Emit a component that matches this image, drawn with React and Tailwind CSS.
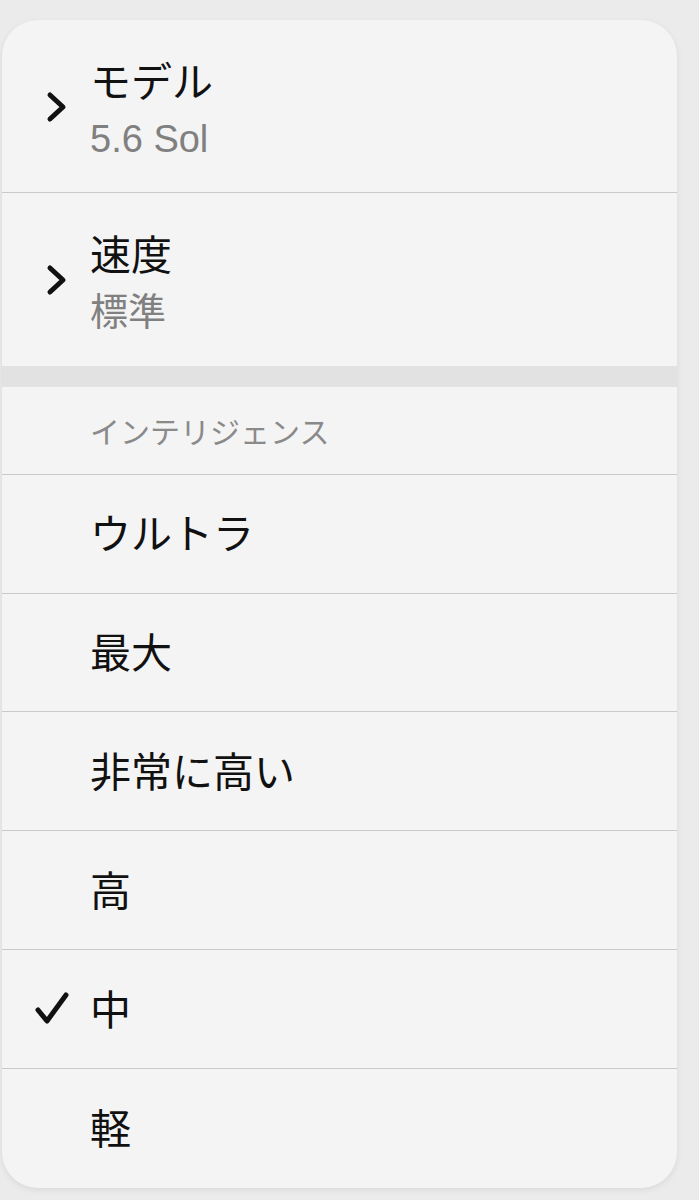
const Chevron = () => (
  <svg width="22" height="32" viewBox="0 0 22 32" fill="none">
    <polyline points="4,4 17,16 4,28" stroke="#111" strokeWidth="5" strokeLinecap="round" strokeLinejoin="round" />
  </svg>
)

const Check = () => (
  <svg width="36" height="36" viewBox="0 0 36 36" fill="none">
    <polyline points="4,19 13,30 32,4" stroke="#111" strokeWidth="5" strokeLinecap="round" strokeLinejoin="round" />
  </svg>
)

const levels = [
  { label: 'ウルトラ' },
  { label: '最大' },
  { label: '非常に高い' },
  { label: '高' },
  { label: '中', checked: true },
  { label: '軽' },
]

function SubmenuRow({ title, value, divider }) {
  return (
    <div className={`flex items-center h-[173px] ${divider ? 'border-b border-[#c9c9c9]' : ''}`}>
      <div className="w-[88px] flex justify-end pr-[22px] pt-[2px]">
        <Chevron />
      </div>
      <div className="flex flex-col pt-[8px]">
        <span className="text-[41px] leading-[52px] text-[#111]">{title}</span>
        <span className="text-[38px] leading-[48px] text-[#808080] mt-[6px]">{value}</span>
      </div>
    </div>
  )
}

export default function App() {
  return (
    <div className="bg-[#ebebeb] w-[699px] h-[1200px] pt-[20px] pl-[2px] pr-[22px] font-['Liberation_Sans','Noto_Sans_CJK_JP',sans-serif]">
      <div className="bg-[#f4f4f4] rounded-[36px] overflow-hidden shadow-[0_2px_6px_rgba(0,0,0,0.08)] h-[1168px] flex flex-col">
        <SubmenuRow title="モデル" value="5.6 Sol" divider />
        <SubmenuRow title="速度" value="標準" />

        <div className="h-[21px] bg-[#e2e2e2]" />

        <div className="h-[88px] flex items-center pl-[88px] pt-[6px] border-b border-[#c9c9c9]">
          <span className="text-[30px] text-[#8a8a8a] leading-none">インテリジェンス</span>
        </div>

        {levels.map((lv, i) => (
          <div
            key={lv.label}
            className={`flex items-center h-[119px] ${i < levels.length - 1 ? 'border-b border-[#c9c9c9]' : ''}`}
          >
            <div className="w-[88px] flex justify-end pr-[20px]">
              {lv.checked && <Check />}
            </div>
            <span className="text-[41px] leading-none text-[#111] pt-[4px]">{lv.label}</span>
          </div>
        ))}
      </div>
    </div>
  )
}
